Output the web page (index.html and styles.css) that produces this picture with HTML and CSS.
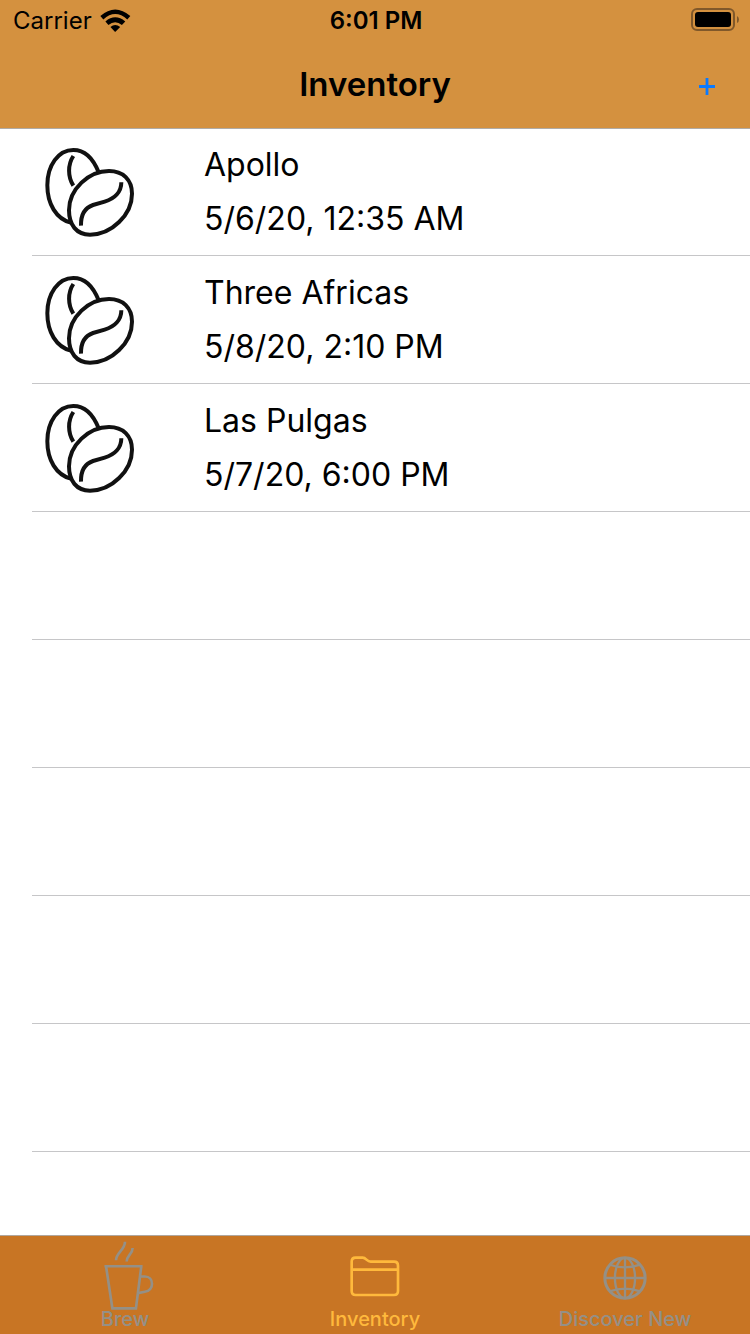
FILE: index.html
```html
<!DOCTYPE html>
<html lang="en">
<head>
<meta charset="utf-8">
<meta name="viewport" content="width=device-width, initial-scale=1">
<title>Inventory</title>
<link rel="stylesheet" href="styles.css">
</head>
<body>
<svg class="defs" aria-hidden="true">
  <symbol id="beans" viewBox="60 30 300 282">
    <g fill="none" stroke="#111" stroke-width="12">
      <path d="M239 112C222 69 196 45 163 45C118 45 85 91 85 151C85 208 112 251 155 263"/>
      <path d="M270 108C312 108 339 134 339 176C339 239 278 299 213 299C172 299 150 269 150 226C150 162 210 108 270 108Z"/>
      <path d="M163 63C146 89 146 125 163 152"/>
      <path d="M307 142C307 171 287 191 257 200L222 210C199 218 185 237 186 272"/>
    </g>
  </symbol>
</svg>
<div class="app">
  <header class="top">
    <div class="status">
      <div class="carrier">
        <span>Carrier</span>
        <svg class="wifi" viewBox="298 26 92 68" aria-hidden="true">
          <path d="M299 47Q343 8 388 47L379 57Q343 25 308 57Z"/>
          <path d="M314 63Q343 38 373 63L363 73Q343 57 323 73Z"/>
          <path d="M329 79Q343 68 358 79L343 94Z"/>
        </svg>
      </div>
      <time class="clock">6:01 PM</time>
      <svg class="battery" viewBox="0 0 48 24" aria-hidden="true">
        <rect x="1" y="1" width="42" height="21" rx="5" fill="none" stroke="#80582a" stroke-width="2"/>
        <rect x="4" y="4" width="36" height="15" rx="3"/>
        <path d="M46 8Q48 9 48 11.500Q48 14 46 15Z" fill="#80582a"/>
      </svg>
    </div>
    <div class="nav">
      <h1 class="title">Inventory</h1>
      <button class="add" type="button" aria-label="Add">
        <svg class="plus" viewBox="0 0 16 17" aria-hidden="true"><path d="M0 8.500H16M8 0V17" stroke="#0a7aff" stroke-width="2.800"/></svg>
      </button>
    </div>
  </header>
  <main class="content">
    <ul class="list">
      <li class="row"><svg class="beans"><use href="#beans"/></svg><div class="info"><div>Apollo</div><div>5/6/20, 12:35 AM</div></div></li>
      <li class="row"><svg class="beans"><use href="#beans"/></svg><div class="info"><div>Three Africas</div><div>5/8/20, 2:10 PM</div></div></li>
      <li class="row"><svg class="beans"><use href="#beans"/></svg><div class="info"><div>Las Pulgas</div><div>5/7/20, 6:00 PM</div></div></li>
      <li class="row"></li>
      <li class="row"></li>
      <li class="row"></li>
      <li class="row"></li>
      <li class="row"></li>
    </ul>
  </main>
  <nav class="tabs">
    <button class="tab" type="button">
      <svg class="cup" viewBox="48 45 174 208" aria-hidden="true">
        <g fill="none" stroke="currentColor" stroke-width="8">
          <path d="M73 121H188M78 122L97 248H168L184 122"/>
          <path d="M179 152H195C223 152 224 195 195 198L174 202"/>
          <path d="M108 103C108 80 135 72 135 47M140 107C140 88 158 84 158 66"/>
        </g>
      </svg>
      <span>Brew</span>
    </button>
    <button class="tab active" type="button" aria-current="page">
      <svg class="folder" viewBox="119 92 150 123" aria-hidden="true">
        <g fill="none" stroke="currentColor" stroke-width="8">
          <path d="M124 109Q124 97 136 97H157C168 97 169 109 181 109H251Q263 109 263 121V197Q263 209 251 209H136Q124 209 124 197ZM124 133H263"/>
        </g>
      </svg>
      <span>Inventory</span>
    </button>
    <button class="tab" type="button">
      <svg class="globe" viewBox="173 92 131 131" aria-hidden="true">
        <g fill="none" stroke="currentColor" stroke-width="7">
          <circle cx="238.500" cy="157.500" r="60" stroke-width="9"/>
          <ellipse cx="238.500" cy="157.500" rx="30" ry="60"/>
          <path d="M238.500 96V219M177 157.500H300M193 118Q238 134 284 118M193 197Q238 181 284 197"/>
        </g>
      </svg>
      <span>Discover New</span>
    </button>
  </nav>
</div>
</body>
</html>
```
FILE: styles.css
```css
* {
  box-sizing: border-box;
}

body {
  margin: 0;
  background: #fff;
  color: #000;
  font-family: Inter, "Liberation Sans", sans-serif;
}

button {
  border: 0;
  padding: 0;
  background: none;
  font: inherit;
  cursor: pointer;
}

.defs {
  display: none;
}

.app {
  display: flex;
  flex-direction: column;
  height: 100vh;
}

.top {
  position: relative;
  z-index: 1;
  background: #d4913f;
  box-shadow: 0 1px 0 #b0aba5;
}

.status {
  display: grid;
  grid-template-columns: 1fr auto 1fr;
  align-items: center;
  height: 40px;
  padding: 0 11px 0 13px;
  font-size: 24px;
}

.carrier {
  display: flex;
  align-items: center;
  gap: 8px;
}

.wifi {
  width: 31px;
  height: 23px;
}

.clock {
  font-weight: 600;
}

.battery {
  width: 48px;
  height: 24px;
  justify-self: end;
}

.nav {
  display: grid;
  grid-template-columns: 1fr auto 1fr;
  align-items: center;
  height: 88px;
  padding: 0 22px;
}

.title {
  grid-column: 2;
  margin: 0;
  font-size: 33px;
  font-weight: 600;
}

.add {
  display: grid;
  place-items: center;
  justify-self: end;
  width: 42px;
  height: 44px;
  padding-top: 4px;
}

.plus {
  width: 16px;
  height: 17px;
}

.content {
  flex: 1;
  min-height: 0;
  overflow: hidden;
}

.list {
  margin: 0;
  padding: 0 0 0 32px;
  list-style: none;
}

.row {
  display: flex;
  align-items: center;
  gap: 65px;
  height: 128px;
  padding-left: 7px;
  border-bottom: 1px solid #c6c6c8;
}

.beans {
  width: 100px;
  height: 94px;
}

.info {
  font-size: 32px;
  line-height: 54px;
}

.tabs {
  display: grid;
  grid-template-columns: repeat(3, 1fr);
  height: 99px;
  border-top: 1px solid #b0a79e;
  background: #c87524;
}

.tab {
  display: flex;
  flex-direction: column;
  align-items: center;
  justify-content: flex-end;
  padding-bottom: 4px;
  color: #949087;
  font-size: 20px;
  font-weight: 500;
  line-height: 22px;
}

.active {
  color: #ffb93c;
}

.cup {
  width: 58px;
  height: 69px;
  margin-bottom: -2px;
}

.folder {
  width: 50px;
  height: 41px;
  margin-bottom: 11px;
}

.globe {
  width: 44px;
  height: 44px;
  margin-bottom: 8px;
}
```
